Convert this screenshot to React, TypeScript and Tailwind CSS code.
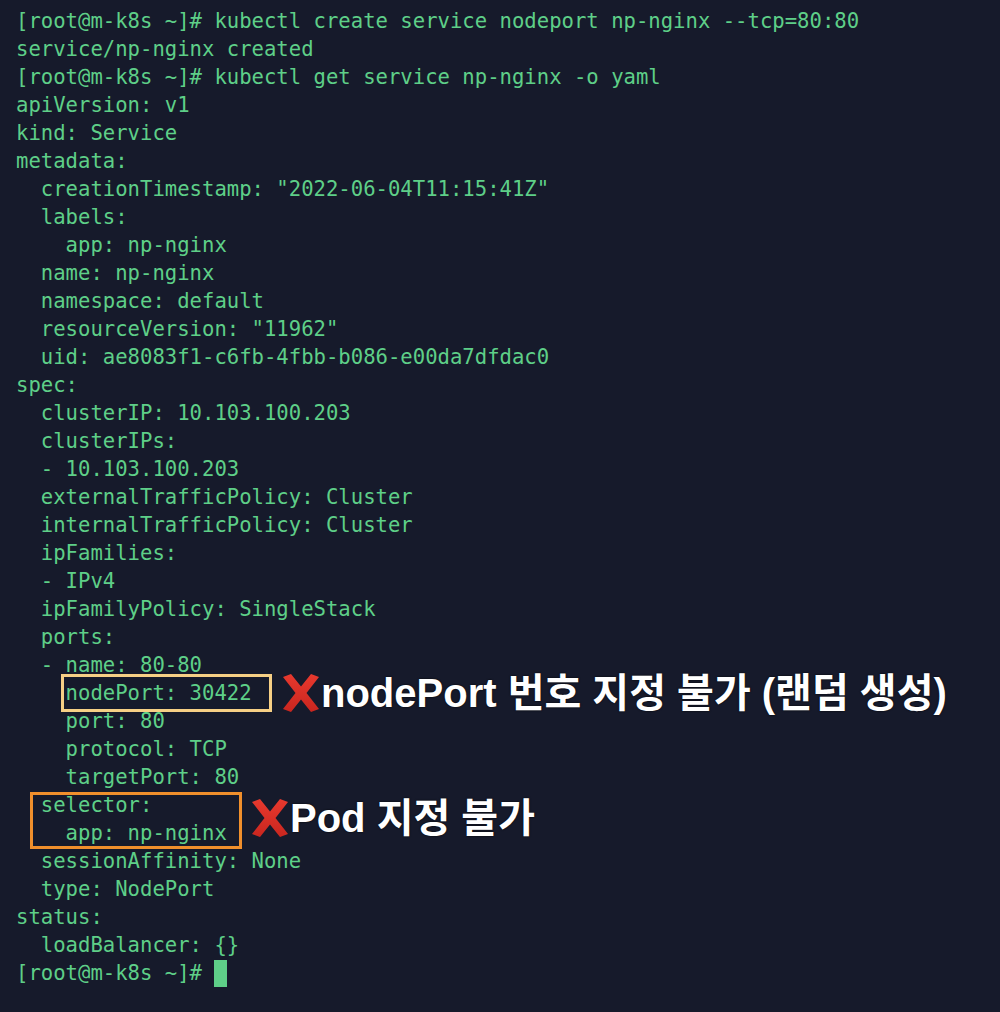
import React from "react";

const lines: string[] = [
  "[root@m-k8s ~]# kubectl create service nodeport np-nginx --tcp=80:80",
  "service/np-nginx created",
  "[root@m-k8s ~]# kubectl get service np-nginx -o yaml",
  "apiVersion: v1",
  "kind: Service",
  "metadata:",
  '  creationTimestamp: "2022-06-04T11:15:41Z"',
  "  labels:",
  "    app: np-nginx",
  "  name: np-nginx",
  "  namespace: default",
  '  resourceVersion: "11962"',
  "  uid: ae8083f1-c6fb-4fbb-b086-e00da7dfdac0",
  "spec:",
  "  clusterIP: 10.103.100.203",
  "  clusterIPs:",
  "  - 10.103.100.203",
  "  externalTrafficPolicy: Cluster",
  "  internalTrafficPolicy: Cluster",
  "  ipFamilies:",
  "  - IPv4",
  "  ipFamilyPolicy: SingleStack",
  "  ports:",
  "  - name: 80-80",
  "    nodePort: 30422",
  "    port: 80",
  "    protocol: TCP",
  "    targetPort: 80",
  "  selector:",
  "    app: np-nginx",
  "  sessionAffinity: None",
  "  type: NodePort",
  "status:",
  "  loadBalancer: {}",
];

function CrossMark() {
  return (
    <svg width="40" height="38" viewBox="0 0 40 38" className="shrink-0">
      <defs>
        <linearGradient id="xg" x1="0" y1="0" x2="0" y2="1">
          <stop offset="0" stopColor="#e8392e" />
          <stop offset="1" stopColor="#c9261f" />
        </linearGradient>
      </defs>
      <path d="M2 3 L10 0 L20 12.5 L30 0 L38 3 L25.5 19 L38 35 L30 38 L20 25.5 L10 38 L2 35 L14.5 19 Z" fill="url(#xg)" />
    </svg>
  );
}

export default function App() {
  return (
    <div className="w-[1000px] h-[1012px] bg-[#161a2b] overflow-hidden relative">
      <div
        className="pt-[7px] pl-[16px] text-[#5ecf88] text-[20.6px] leading-[28px] whitespace-pre"
        style={{ fontFamily: '"DejaVu Sans Mono", "Liberation Mono", monospace' }}
      >
        {lines.map((l, i) => (
          <div key={i} className="h-[28px]">{l}</div>
        ))}
        <div className="h-[28px] flex items-center">
          <span>{"[root@m-k8s ~]# "}</span>
          <span className="inline-block w-[13px] h-[27px] bg-[#5ecf88]" />
        </div>
      </div>

      {/* nodePort highlight box */}
      <div className="absolute left-[61px] top-[674px] w-[211px] h-[38px] border-[3px] border-[#f6cf85] pointer-events-none" />
      {/* selector highlight box */}
      <div className="absolute left-[30px] top-[792px] w-[212px] h-[57px] border-[3px] border-[#f08f2c] pointer-events-none" />

      {/* annotations */}
      <div
        className="absolute left-[281px] top-[671px] flex items-center text-white font-bold text-[40px] leading-[44px] whitespace-nowrap"
        style={{ fontFamily: '"Liberation Sans", "Noto Sans CJK KR", sans-serif', textShadow: "0 0 2px #000" }}
      >
        <CrossMark />
        <span>nodePort 번호 지정 불가 (랜덤 생성)</span>
      </div>
      <div
        className="absolute left-[250px] top-[796px] flex items-center text-white font-bold text-[40px] leading-[44px] whitespace-nowrap"
        style={{ fontFamily: '"Liberation Sans", "Noto Sans CJK KR", sans-serif', textShadow: "0 0 2px #000" }}
      >
        <CrossMark />
        <span>Pod 지정 불가</span>
      </div>
    </div>
  );
}
